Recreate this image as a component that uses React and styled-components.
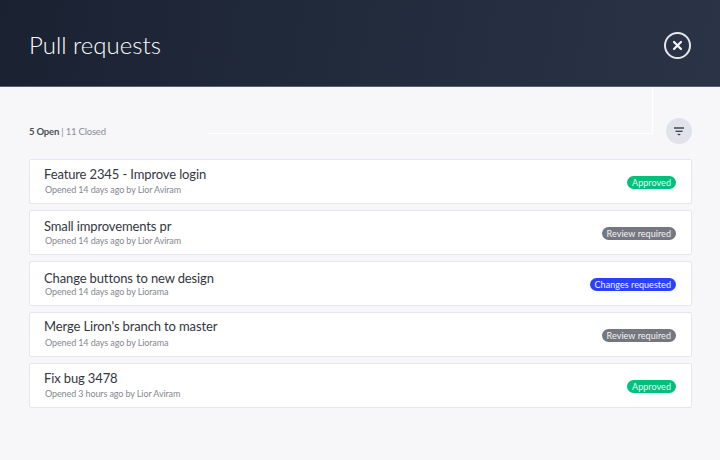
import React from 'react';
import styled, { createGlobalStyle } from 'styled-components';

const GlobalStyle = createGlobalStyle`
    html, body {
        margin: 0;
        padding: 0;
        height: 100%;
        background: #f7f7fa;
    }
    body {
        font-family: 'Lato', 'Liberation Sans', sans-serif;
        overflow: hidden;
    }
`;

const Page = styled.div`
    position: relative;
    width: 720px;
    height: 460px;
    background: #f7f7fa;
`;

const Header = styled.header`
    box-sizing: border-box;
    height: 87px;
    padding: 3px 29px 0;
    display: flex;
    align-items: center;
    justify-content: space-between;
    background: linear-gradient(100deg, #1a2232, #2a3446);
    border-bottom: 1px solid #59606e;
`;

const Title = styled.h1`
    margin: 0;
    font-size: 24px;
    font-weight: 300;
    letter-spacing: 0;
    color: #ffffff;
`;

const CloseButton = styled.button`
    box-sizing: border-box;
    width: 27px;
    height: 27px;
    margin-top: 1px;
    padding: 0;
    display: flex;
    align-items: center;
    justify-content: center;
    background: transparent;
    border: 2px solid #e6e7ea;
    border-radius: 50%;
`;

// 흐릿한 흰 테두리
const GhostFrame = styled.div`
    position: absolute;
    top: 87px;
    left: 207px;
    width: 445px;
    height: 46px;
    border-right: 1px solid #ffffff;
    border-bottom: 1px solid #ffffff;
`;

const Toolbar = styled.div`
    height: 26px;
    margin: 31px 28px 15px 29px;
    display: flex;
    align-items: center;
    justify-content: space-between;
`;

const Counts = styled.div`
    font-size: 9.5px;
    letter-spacing: -0.2px;
    color: #8a8d98;

    b {
        font-weight: 700;
        color: #4a4d57;
    }
`;

const FilterButton = styled.button`
    width: 26px;
    height: 26px;
    padding: 0;
    display: flex;
    align-items: center;
    justify-content: center;
    background: #e1e3eb;
    border: none;
    border-radius: 50%;
`;

const List = styled.div`
    margin: 0 28px 0 29px;
    display: flex;
    flex-direction: column;
    gap: 6px;
`;

const Card = styled.div`
    box-sizing: border-box;
    height: 45px;
    padding: 0 15px 0 14px;
    display: flex;
    align-items: flex-start;
    justify-content: space-between;
    background: #ffffff;
    border: 1px solid #e6e7ee;
    border-radius: 2px;
`;

const CardText = styled.div`
    position: relative;
    height: 100%;
`;

const CardTitle = styled.div`
    margin-top: ${(p) => p.$top}px;
    font-size: 13px;
    line-height: 16px;
    letter-spacing: -0.13px;
    color: #33363e;
    white-space: nowrap;
`;

const CardMeta = styled.div`
    position: absolute;
    top: 24px;
    left: 1px;
    font-size: 9px;
    line-height: 12px;
    letter-spacing: -0.11px;
    color: #85888f;
    white-space: nowrap;
`;

const badgeColors = {
    approved: '#00c17c',
    review: '#757680',
    changes: '#2c41ff',
};

const Badge = styled.span`
    align-self: center;
    height: 13px;
    margin-top: 1px;
    padding: 0 5px;
    display: flex;
    align-items: center;
    font-size: 9px;
    letter-spacing: 0.05px;
    color: #f2f4f6;
    background: ${(p) => badgeColors[p.$status]};
    border-radius: 7px;
    white-space: nowrap;
`;

const pulls = [
    { title: 'Feature 2345 - Improve login', meta: 'Opened 14 days ago by Lior Aviram', status: 'approved', label: 'Approved', top: 6 },
    { title: 'Small improvements pr', meta: 'Opened 14 days ago by Lior Aviram', status: 'review', label: 'Review required', top: 7 },
    { title: 'Change buttons to new design', meta: 'Opened 14 days ago by Liorama', status: 'changes', label: 'Changes requested', top: 8 },
    { title: "Merge Liron's branch to master", meta: 'Opened 14 days ago by Liorama', status: 'review', label: 'Review required', top: 5 },
    { title: 'Fix bug 3478', meta: 'Opened 3 hours ago by Lior Aviram', status: 'approved', label: 'Approved', top: 6 },
];

const App = () => (
    <Page>
        <GlobalStyle />
        <Header>
            <Title>Pull requests</Title>
            <CloseButton aria-label="Close">
                <svg width="11" height="11" viewBox="0 0 11 11">
                    <path d="M2 2l7 7M9 2l-7 7" stroke="#f4f5f7" strokeWidth="2.2" strokeLinecap="round" />
                </svg>
            </CloseButton>
        </Header>
        <GhostFrame />
        <Toolbar>
            <Counts><b>5 Open</b> | 11 Closed</Counts>
            <FilterButton aria-label="Filter">
                <svg width="12" height="9" viewBox="0 0 12 9">
                    <path d="M1 1h10" stroke="#3a3c45" strokeWidth="1.4" />
                    <path d="M2.5 4.3h7" stroke="#3a3c45" strokeWidth="1.3" />
                    <path d="M4.7 7.5h2.6" stroke="#3a3c45" strokeWidth="1.3" />
                </svg>
            </FilterButton>
        </Toolbar>
        <List>
            {pulls.map((pr) => (
                <Card key={pr.title}>
                    <CardText>
                        <CardTitle $top={pr.top}>{pr.title}</CardTitle>
                        <CardMeta>{pr.meta}</CardMeta>
                    </CardText>
                    <Badge $status={pr.status}>{pr.label}</Badge>
                </Card>
            ))}
        </List>
    </Page>
);

export default App;
